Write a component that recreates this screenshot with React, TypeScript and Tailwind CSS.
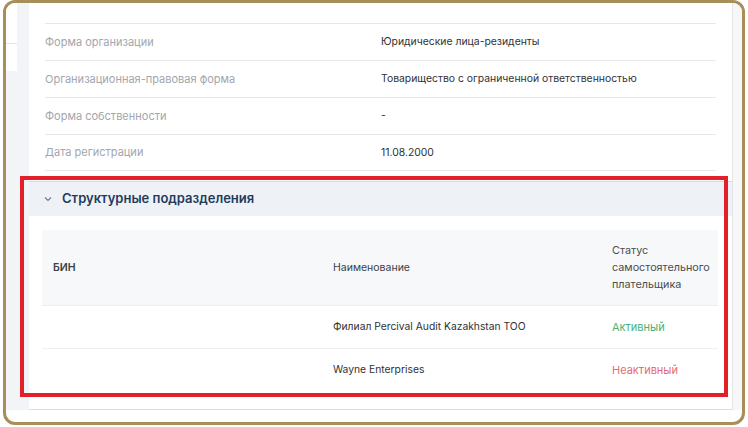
import React from "react";

const info = [
  { label: "Форма организации", value: "Юридические лица-резиденты" },
  { label: "Организационная-правовая форма", value: "Товарищество с ограниченной ответственностью" },
  { label: "Форма собственности", value: "-" },
  { label: "Дата регистрации", value: "11.08.2000" },
];

const branches = [
  { bin: "", name: "Филиал Percival Audit Kazakhstan TOO", status: "Активный", active: true },
  { bin: "", name: "Wayne Enterprises", status: "Неактивный", active: false },
];

export default function App() {
  return (
    <div className="relative w-[748px] h-[427px] bg-white font-['Inter','Noto_Sans',sans-serif] overflow-hidden">
      <div className="ml-[3px] w-[742px] h-[425px] border-[3px] border-[#a68f58] rounded-[12px] overflow-hidden flex bg-white">
        {/* left sidebar strip */}
        <div className="w-[23px] flex flex-col h-[407px]">
          <div className="flex flex-1">
            <div className="w-[11px] flex flex-col">
              <div className="h-[68px] bg-white flex flex-col">
                <div className="h-[40px]" />
                <div className="h-px bg-[#e3e5ea]" />
              </div>
              <div className="flex-1 bg-[#f3f4f8]" />
            </div>
            <div className="flex-1 bg-[#f3f4f8]" />
          </div>
        </div>

        {/* main card */}
        <div className="w-[703px] flex flex-col">
          <div className="h-[407px] bg-white border-b border-[#dcdde1] flex flex-col">
            <div className="h-[20px]" />
            <div className="px-[16px]">
              {info.map((r, i) => (
                <div
                  key={r.label}
                  className={`grid grid-cols-[336px_1fr] items-center h-[37px] border-t border-[#e6e7ea] ${i === info.length - 1 ? "border-b" : ""}`}
                >
                  <span className="text-[11px] text-[#a2a6ad]">{r.label}</span>
                  <span className="text-[10.4px] text-[#2f3237]">{r.value}</span>
                </div>
              ))}
            </div>

            <div className="mt-[10px] h-[35px] bg-[#eef2f6] border-t border-[#c9e6c0] flex items-center pl-[14px] gap-[10px]">
              <svg width="8" height="6" viewBox="0 0 8 6" className="ml-px">
                <polyline points="1,1.5 4,4.5 7,1.5" fill="none" stroke="#6c7f96" strokeWidth="1.2" />
              </svg>
              <span className="text-[13px] font-semibold text-[#1f3b5c]">Структурные подразделения</span>
            </div>

            <div className="pl-[13px] pr-[14px] pt-[14px]">
              <div className="grid grid-cols-[280px_279px_1fr] text-[10.5px]">
                <div className="contents">
                  <div className="bg-[#f7f8f9] h-[75px] flex items-center pl-[11px] font-semibold text-[#3c3f44]">БИН</div>
                  <div className="bg-[#f7f8f9] h-[75px] flex items-center pl-[11px] text-[#3c3f44]">Наименование</div>
                  <div className="bg-[#f7f8f9] h-[75px] flex items-center pl-[11px] text-[#4a4d52] leading-[17px] text-[10.8px]">
                    Статус
                    <br />
                    самостоятельного
                    <br />
                    плательщика
                  </div>
                </div>
                {branches.map((b) => (
                  <div key={b.name} className="contents">
                    <div className="h-[43px] border-t border-[#eeeff1] flex items-center pl-[11px] text-[#2f3237]">{b.bin}</div>
                    <div className="h-[43px] border-t border-[#eeeff1] flex items-center pl-[11px] text-[10.3px] text-[#2f3237]">{b.name}</div>
                    <div
                      className={`h-[43px] border-t border-[#eeeff1] flex items-center pl-[11px] text-[11px] ${b.active ? "text-[#49b27a]" : "text-[#e46b78]"}`}
                    >
                      {b.status}
                    </div>
                  </div>
                ))}
              </div>
            </div>
          </div>
          <div className="flex-1 bg-white" />
        </div>

        {/* right strip */}
        <div className="flex-1 bg-[#f7f7f9] border-l border-[#e4e5e8] h-[407px]" />
      </div>

      {/* annotation highlight */}
      <div className="absolute left-[20px] top-[176px] w-[708px] h-[221px] border-[4px] border-[#e2202a] pointer-events-none" />
    </div>
  );
}
